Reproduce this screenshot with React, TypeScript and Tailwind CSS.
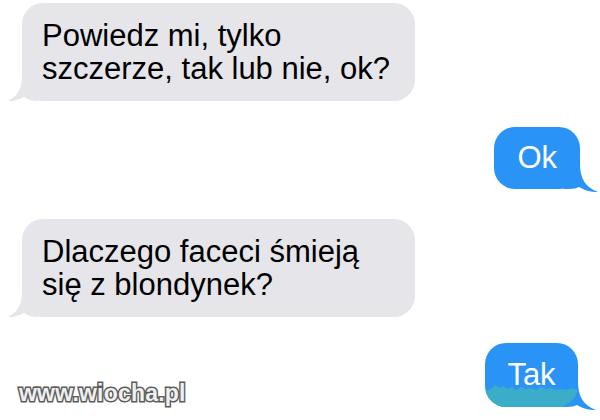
import React from "react";

const font = { fontFamily: '"Liberation Sans", Arial, sans-serif' };

function TailLeft({ color }: { color: string }) {
  return (
    <svg
      className="absolute bottom-0 left-[-14px]"
      width="30"
      height="26"
      viewBox="0 0 30 26"
    >
      <path
        d="M14 0 C14 13 10 21 0 26 C7 26 12 24 16 22 C20 24.5 24 26 30 26 L30 0 Z"
        fill={color}
      />
    </svg>
  );
}

function TailRight({ color }: { color: string }) {
  return (
    <svg
      className="absolute bottom-[-3px] right-[-18px] scale-x-[-1]"
      width="34"
      height="28"
      viewBox="0 0 34 28"
    >
      <path
        d="M18 0 C18 14 13 23 0 28 C8 28 14 26 19 23 C23 25 28 25 34 25 L34 0 Z"
        fill={color}
      />
    </svg>
  );
}

export default function App() {
  return (
    <div
      className="relative w-[600px] h-[420px] overflow-hidden bg-white text-[31px] leading-[33px] text-black"
      style={font}
    >
      <div className="flex flex-col">
        {/* Bubble 1 */}
        <div className="relative ml-[22px] mt-[3px] w-[393px] h-[98px] rounded-[21px] bg-[#e5e5ea] px-5 py-4 whitespace-nowrap">
          <TailLeft color="#e5e5ea" />
          <div className="relative">
            Powiedz mi, tylko
            <br />
            szczerze, tak lub nie, ok?
          </div>
        </div>

        {/* Ok */}
        <div className="flex justify-end mt-[26px] pr-[20px]">
          <div className="relative h-[62px] rounded-[21px] bg-[#2a93f6] px-[23px] py-[14px] text-white">
            <TailRight color="#2a93f6" />
            <div className="relative">Ok</div>
          </div>
        </div>

        {/* Bubble 3 */}
        <div className="relative ml-[22px] mt-[30px] w-[393px] h-[98px] rounded-[21px] bg-[#e5e5ea] px-5 py-4 whitespace-nowrap">
          <TailLeft color="#e5e5ea" />
          <div className="relative">
            Dlaczego faceci śmieją
            <br />
            się z blondynek?
          </div>
        </div>

        {/* Tak */}
        <div className="flex justify-end mt-[26px] pr-[22px]">
          <div className="relative h-[64px] w-[93px] rounded-[21px] bg-[#2a93f6] pt-[15px] text-center text-white">
            <TailRight color="#2a93f6" />
            <div className="absolute inset-0 overflow-hidden rounded-[21px]">
              <svg className="absolute left-0 bottom-0" width="93" height="24" viewBox="0 0 93 24">
                <path
                  d="M0 8 L6 6 L10 2 L14 5 L18 3 L22 6 L27 4 L31 7 L36 4 L41 6 L46 5 L51 7 L56 4 L61 6 L66 5 L71 7 L76 6 L81 7 L86 5 L93 7 L93 24 L0 24 Z"
                  fill="#3badc8"
                />
              </svg>
            </div>
            <div className="relative">Tak</div>
          </div>
        </div>
      </div>

      {/* watermark */}
      <div
        className="absolute left-[19px] top-[381px] text-[23px] leading-[24px] font-bold text-[#f0f0f0] tracking-[0.2px] [-webkit-text-stroke:3px_#5c5c5c] [paint-order:stroke_fill]"
        style={font}
      >
        www.wiocha.pl
      </div>
    </div>
  );
}
